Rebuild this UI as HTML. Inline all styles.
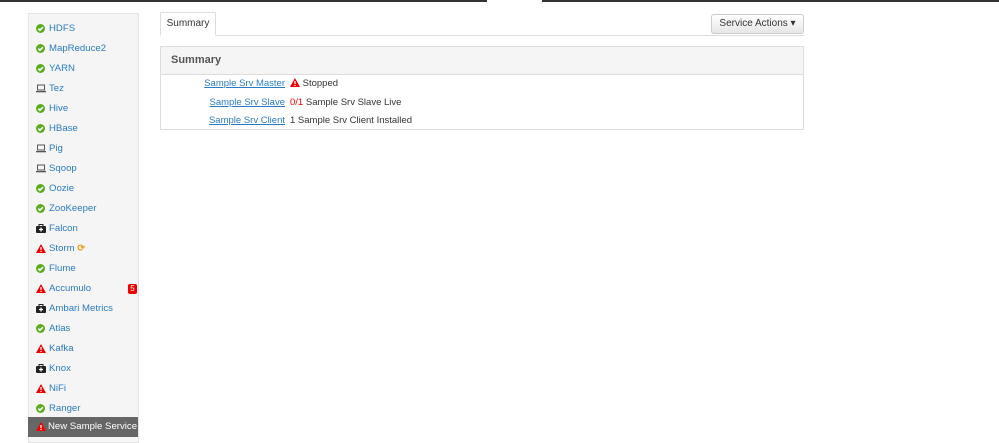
<!DOCTYPE html>
<html><head><style>
body{margin:0;width:999px;height:440px;background:#fff;font-family:"Liberation Sans",sans-serif;font-size:10px;position:relative;overflow:hidden;color:#333}
.top{position:absolute;top:0;height:2px;background:#333}
.side{position:absolute;left:28px;top:13px;width:111px;height:430px;background:#f5f5f5;border:1px solid #e3e3e3;box-sizing:border-box}
.it{position:absolute;left:5px;height:20px;line-height:20px;color:#2a7bc5;font-size:9.6px;width:104px;white-space:nowrap}
.it svg{position:absolute;left:2px;top:5px}
.it span{position:absolute;left:15px}
.sel{background:#666;color:#fff;left:-1px;width:110px}
.sel svg{left:8px}.sel span{left:20px}
a{color:#2a7bc5;text-decoration:underline}
</style></head><body>
<div class="top" style="left:0;width:487px"></div>
<div class="top" style="left:542px;width:457px"></div>
<div class="side">
<svg width="0" height="0" style="position:absolute"><defs>
<g id="ok"><circle cx="4.5" cy="4.5" r="4.5" fill="#5aac1e"/><path d="M2.3 4.6l1.6 1.6 3-3" stroke="#fff" stroke-width="1.6" fill="none"/></g>
<g id="lap"><rect x="1.5" y="1" width="7" height="5" fill="none" stroke="#555" stroke-width="1"/><rect x="0" y="7" width="10" height="1.3" fill="#555"/></g>
<g id="warn"><path d="M5 0L10 9H0Z" fill="#e00"/><rect x="4.4" y="3" width="1.2" height="3.2" fill="#fff"/><rect x="4.4" y="7" width="1.2" height="1" fill="#fff"/></g>
<g id="mnt"><rect x="0" y="2" width="10" height="7" rx="1" fill="#222"/><rect x="3" y="0.5" width="4" height="2" fill="none" stroke="#222"/><path d="M5 3.5v4M3 5.5h4" stroke="#fff" stroke-width="1.2"/></g>
</defs></svg>
<div class="it" style="top:5px"><svg width="10" height="10"><use href="#ok"/></svg><span>HDFS</span></div>
<div class="it" style="top:25px"><svg width="10" height="10"><use href="#ok"/></svg><span>MapReduce2</span></div>
<div class="it" style="top:45px"><svg width="10" height="10"><use href="#ok"/></svg><span>YARN</span></div>
<div class="it" style="top:65px"><svg width="10" height="10"><use href="#lap"/></svg><span>Tez</span></div>
<div class="it" style="top:85px"><svg width="10" height="10"><use href="#ok"/></svg><span>Hive</span></div>
<div class="it" style="top:105px"><svg width="10" height="10"><use href="#ok"/></svg><span>HBase</span></div>
<div class="it" style="top:125px"><svg width="10" height="10"><use href="#lap"/></svg><span>Pig</span></div>
<div class="it" style="top:145px"><svg width="10" height="10"><use href="#lap"/></svg><span>Sqoop</span></div>
<div class="it" style="top:165px"><svg width="10" height="10"><use href="#ok"/></svg><span>Oozie</span></div>
<div class="it" style="top:185px"><svg width="10" height="10"><use href="#ok"/></svg><span>ZooKeeper</span></div>
<div class="it" style="top:205px"><svg width="10" height="10"><use href="#mnt"/></svg><span>Falcon</span></div>
<div class="it" style="top:225px"><svg width="10" height="10"><use href="#warn"/></svg><span>Storm <b style="color:#f0a020">⟳</b></span></div>
<div class="it" style="top:245px"><svg width="10" height="10"><use href="#ok"/></svg><span>Flume</span></div>
<div class="it" style="top:265px"><svg width="10" height="10"><use href="#warn"/></svg><span>Accumulo</span><div style="position:absolute;left:94px;top:5px;width:9px;height:10px;background:#e00;border-radius:2px;color:#fff;font-size:8px;line-height:10px;text-align:center">5</div></div>
<div class="it" style="top:285px"><svg width="10" height="10"><use href="#mnt"/></svg><span>Ambari Metrics</span></div>
<div class="it" style="top:305px"><svg width="10" height="10"><use href="#ok"/></svg><span>Atlas</span></div>
<div class="it" style="top:325px"><svg width="10" height="10"><use href="#warn"/></svg><span>Kafka</span></div>
<div class="it" style="top:345px"><svg width="10" height="10"><use href="#mnt"/></svg><span>Knox</span></div>
<div class="it" style="top:365px"><svg width="10" height="10"><use href="#warn"/></svg><span>NiFi</span></div>
<div class="it" style="top:385px"><svg width="10" height="10"><use href="#ok"/></svg><span>Ranger</span></div>
<div class="it sel" style="top:403px"><svg width="10" height="10"><use href="#warn"/></svg><span>New Sample Service</span></div>
</div>
<div style="position:absolute;left:160px;top:35px;width:644px;height:1px;background:#ddd"></div>
<div style="position:absolute;left:160px;top:12px;width:56px;height:24px;border:1px solid #ddd;border-bottom:1px solid #fff;box-sizing:border-box;background:#fff;line-height:22px;text-align:center;font-size:10px">Summary</div>
<div style="position:absolute;left:711px;top:14px;width:93px;height:20px;border:1px solid #ccc;border-radius:3px;box-sizing:border-box;background:linear-gradient(#fff,#e6e6e6);line-height:18px;text-align:center;font-size:10px">Service Actions ▾</div>
<div style="position:absolute;left:160px;top:46px;width:644px;height:84px;border:1px solid #ddd;box-sizing:border-box">
<div style="height:27px;background:#f5f5f5;border-bottom:1px solid #ddd;line-height:27px;padding-left:10px;font-weight:bold;font-size:11px;color:#555">Summary</div>
<div style="position:absolute;top:28px;left:0;width:124px;text-align:right;line-height:18.5px;font-size:9.5px"><a>Sample Srv Master</a><br><a>Sample Srv Slave</a><br><a>Sample Srv Client</a></div>
<div style="position:absolute;top:28px;left:129px;line-height:18.5px;font-size:9.5px"><svg width="10" height="9" style="vertical-align:-1px"><path d="M5 0L10 9H0Z" fill="#e00"/><rect x="4.4" y="3" width="1.2" height="3.2" fill="#fff"/><rect x="4.4" y="7" width="1.2" height="1" fill="#fff"/></svg> Stopped<br><span style="color:#e00">0/1</span> Sample Srv Slave Live<br>1 Sample Srv Client Installed</div>
</div>
</body></html>
